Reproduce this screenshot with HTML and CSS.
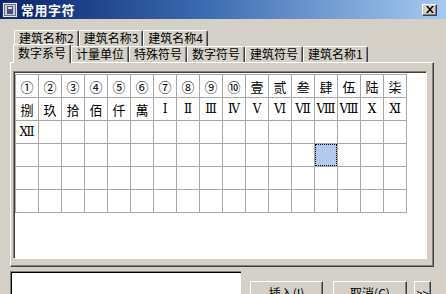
FILE: index.html
```html
<!DOCTYPE html>
<html lang="zh">
<head>
<meta charset="utf-8">
<link rel="stylesheet" href="styles.css">
</head>
<body>
<div class="window">
  <div class="titlebar">
    <svg class="appicon" width="16" height="16" viewBox="0 0 16 16">
      <rect x="0.5" y="0.5" width="15" height="15" fill="#e8e8e8" stroke="#203070"/>
      <rect x="2.5" y="2.5" width="11" height="11" fill="#c8ccd8" stroke="#6a7090"/>
      <rect x="5" y="4" width="6" height="8" fill="#4a5070"/>
      <rect x="6" y="5" width="4" height="2" fill="#d8dce8"/>
    </svg>
    <span class="title">常用字符</span>
    <span class="closebtn">
      <svg width="8" height="7" viewBox="0 0 8 7"><path d="M0 0h2l2 2.5 2-2.5h2l-3 3.5 3 3.5h-2l-2-2.5-2 2.5h-2l3-3.5z" fill="#000"/></svg>
    </span>
  </div>
  <div class="body">
    <div class="tabrow row1">
      <span class="tab">建筑名称2</span>
      <span class="tab">建筑名称3</span>
      <span class="tab">建筑名称4</span>
    </div>
    <div class="tabrow row2">
      <span class="tab selected">数字系号</span>
      <span class="tab">计量单位</span>
      <span class="tab">特殊符号</span>
      <span class="tab">数字符号</span>
      <span class="tab">建筑符号</span>
      <span class="tab">建筑名称1</span>
    </div>
    <div class="panel">
      <div class="listbox">
        <div class="grid">
          <span class="cell">①</span><span class="cell">②</span><span class="cell">③</span><span class="cell">④</span><span class="cell">⑤</span><span class="cell">⑥</span><span class="cell">⑦</span><span class="cell">⑧</span><span class="cell">⑨</span><span class="cell">⑩</span><span class="cell">壹</span><span class="cell">贰</span><span class="cell">叁</span><span class="cell">肆</span><span class="cell">伍</span><span class="cell">陆</span><span class="cell">柒</span>
          <span class="cell">捌</span><span class="cell">玖</span><span class="cell">拾</span><span class="cell">佰</span><span class="cell">仟</span><span class="cell">萬</span><span class="cell rn">Ⅰ</span><span class="cell rn">Ⅱ</span><span class="cell rn">Ⅲ</span><span class="cell rn">Ⅳ</span><span class="cell rn">Ⅴ</span><span class="cell rn">Ⅵ</span><span class="cell rn">Ⅶ</span><span class="cell rn">Ⅷ</span><span class="cell rn">Ⅷ</span><span class="cell rn">Ⅹ</span><span class="cell rn">Ⅺ</span>
          <span class="cell rn">Ⅻ</span><span class="cell"></span><span class="cell"></span><span class="cell"></span><span class="cell"></span><span class="cell"></span><span class="cell"></span><span class="cell"></span><span class="cell"></span><span class="cell"></span><span class="cell"></span><span class="cell"></span><span class="cell"></span><span class="cell"></span><span class="cell"></span><span class="cell"></span><span class="cell"></span>
          <span class="cell"></span><span class="cell"></span><span class="cell"></span><span class="cell"></span><span class="cell"></span><span class="cell"></span><span class="cell"></span><span class="cell"></span><span class="cell"></span><span class="cell"></span><span class="cell"></span><span class="cell"></span><span class="cell"></span><span class="cell sel"></span><span class="cell"></span><span class="cell"></span><span class="cell"></span>
          <span class="cell"></span><span class="cell"></span><span class="cell"></span><span class="cell"></span><span class="cell"></span><span class="cell"></span><span class="cell"></span><span class="cell"></span><span class="cell"></span><span class="cell"></span><span class="cell"></span><span class="cell"></span><span class="cell"></span><span class="cell"></span><span class="cell"></span><span class="cell"></span><span class="cell"></span>
          <span class="cell"></span><span class="cell"></span><span class="cell"></span><span class="cell"></span><span class="cell"></span><span class="cell"></span><span class="cell"></span><span class="cell"></span><span class="cell"></span><span class="cell"></span><span class="cell"></span><span class="cell"></span><span class="cell"></span><span class="cell"></span><span class="cell"></span><span class="cell"></span><span class="cell"></span>
        </div>
      </div>
    </div>
    <div class="bottom">
      <div class="textbox"></div>
      <span class="btn insert">插入(I)</span>
      <span class="btn cancel">取消(C)</span>
      <span class="btn more">&gt;&gt;</span>
    </div>
  </div>
</div>
</body>
</html>
```

FILE: styles.css
```css
html, body {
  margin: 0;
  padding: 0;
}
body {
  width: 446px;
  height: 294px;
  overflow: hidden;
  background: #d4d0c8;
  font-family: "Noto Sans CJK SC", "Liberation Sans", sans-serif;
  font-size: 12px;
  color: #000;
}
.window {
  width: 446px;
  height: 294px;
  display: flex;
  flex-direction: column;
}
.titlebar {
  height: 19px;
  flex: none;
  display: flex;
  align-items: center;
  padding-left: 2px;
  background: linear-gradient(to right, #0a246a 0%, #3a6ab0 45%, #a6caf0 100%);
}
.appicon {
  flex: none;
  display: block;
}
.title {
  margin-left: 3px;
  color: #fff;
  font-weight: bold;
  font-size: 13px;
  line-height: 19px;
  letter-spacing: 0.5px;
}
.closebtn {
  margin-left: auto;
  margin-right: 9px;
  width: 15px;
  height: 12px;
  box-sizing: border-box;
  display: flex;
  align-items: center;
  justify-content: center;
  background: #d4d0c8;
  border-top: 1px solid #fff;
  border-left: 1px solid #fff;
  border-right: 1px solid #404040;
  border-bottom: 1px solid #404040;
  box-shadow: inset -1px -1px #808080;
}
.closebtn svg { display: block; }
.body {
  flex: 1;
  display: flex;
  flex-direction: column;
  padding: 11px 0 0 10px;
}
.tabrow {
  display: flex;
  height: 16px;
  align-items: flex-end;
}
.row1 {
  padding-left: 4px;
}
.row2 {
  padding-left: 3px;
}
.tab {
  height: 16px;
  box-sizing: border-box;
  padding: 0 4px;
  line-height: 14px;
  white-space: nowrap;
  border-top: 1px solid #fff;
  border-left: 1px solid #fff;
  border-right: 1px solid #404040;
  box-shadow: inset -1px 0 #808080;
  border-radius: 2px 2px 0 0;
  background: #d4d0c8;
}
.tab.selected {
  height: 19px;
  margin-top: -2px;
  margin-bottom: -1px;
  position: relative;
  z-index: 1;
  line-height: 16px;
}
.panel {
  width: 424px;
  height: 205px;
  box-sizing: border-box;
  border-top: 1px solid #fff;
  border-left: 1px solid #fff;
  border-right: 1px solid #404040;
  border-bottom: 1px solid #404040;
  box-shadow: inset -1px -1px #808080;
  padding: 8px 0 0 2px;
}
.listbox {
  width: 414px;
  height: 188px;
  box-sizing: border-box;
  background: #fff;
  border-top: 1px solid #808080;
  border-left: 1px solid #808080;
  border-right: 1px solid #fff;
  border-bottom: 1px solid #fff;
  box-shadow: inset 1px 1px #404040;
  padding: 2px 0 0 1px;
}
.grid {
  display: grid;
  grid-template-columns: repeat(17, 22px);
  grid-auto-rows: 22px;
  gap: 1px;
  padding: 1px;
  background: #a8a8a8;
  width: max-content;
}
.cell {
  background: #fff;
  display: flex;
  align-items: center;
  justify-content: center;
  font-size: 13px;
  line-height: 1;
}
.cell.rn {
  font-family: "DejaVu Serif", "Liberation Serif", "Noto Sans CJK SC", serif;
  font-size: 12px;
}
.cell.sel {
  background: #b4c9ef;
  outline: 1px dotted #000;
  outline-offset: -1px;
}
.bottom {
  display: flex;
  align-items: flex-start;
  margin-top: 4px;
}
.textbox {
  width: 231px;
  height: 30px;
  box-sizing: border-box;
  background: #fff;
  border-top: 1px solid #808080;
  border-left: 1px solid #808080;
  box-shadow: inset 1px 1px #000;
}
.btn {
  margin-top: 10px;
  height: 23px;
  box-sizing: border-box;
  display: flex;
  align-items: center;
  justify-content: center;
  border-top: 1px solid #fff;
  border-left: 1px solid #fff;
  border-right: 1px solid #404040;
  border-bottom: 1px solid #404040;
  box-shadow: inset -1px -1px #808080;
  white-space: nowrap;
}
.insert {
  width: 73px;
  margin-left: 9px;
}
.cancel {
  width: 74px;
  margin-left: 10px;
}
.more {
  width: 17px;
  margin-left: 7px;
  font-size: 11px;
}
```
